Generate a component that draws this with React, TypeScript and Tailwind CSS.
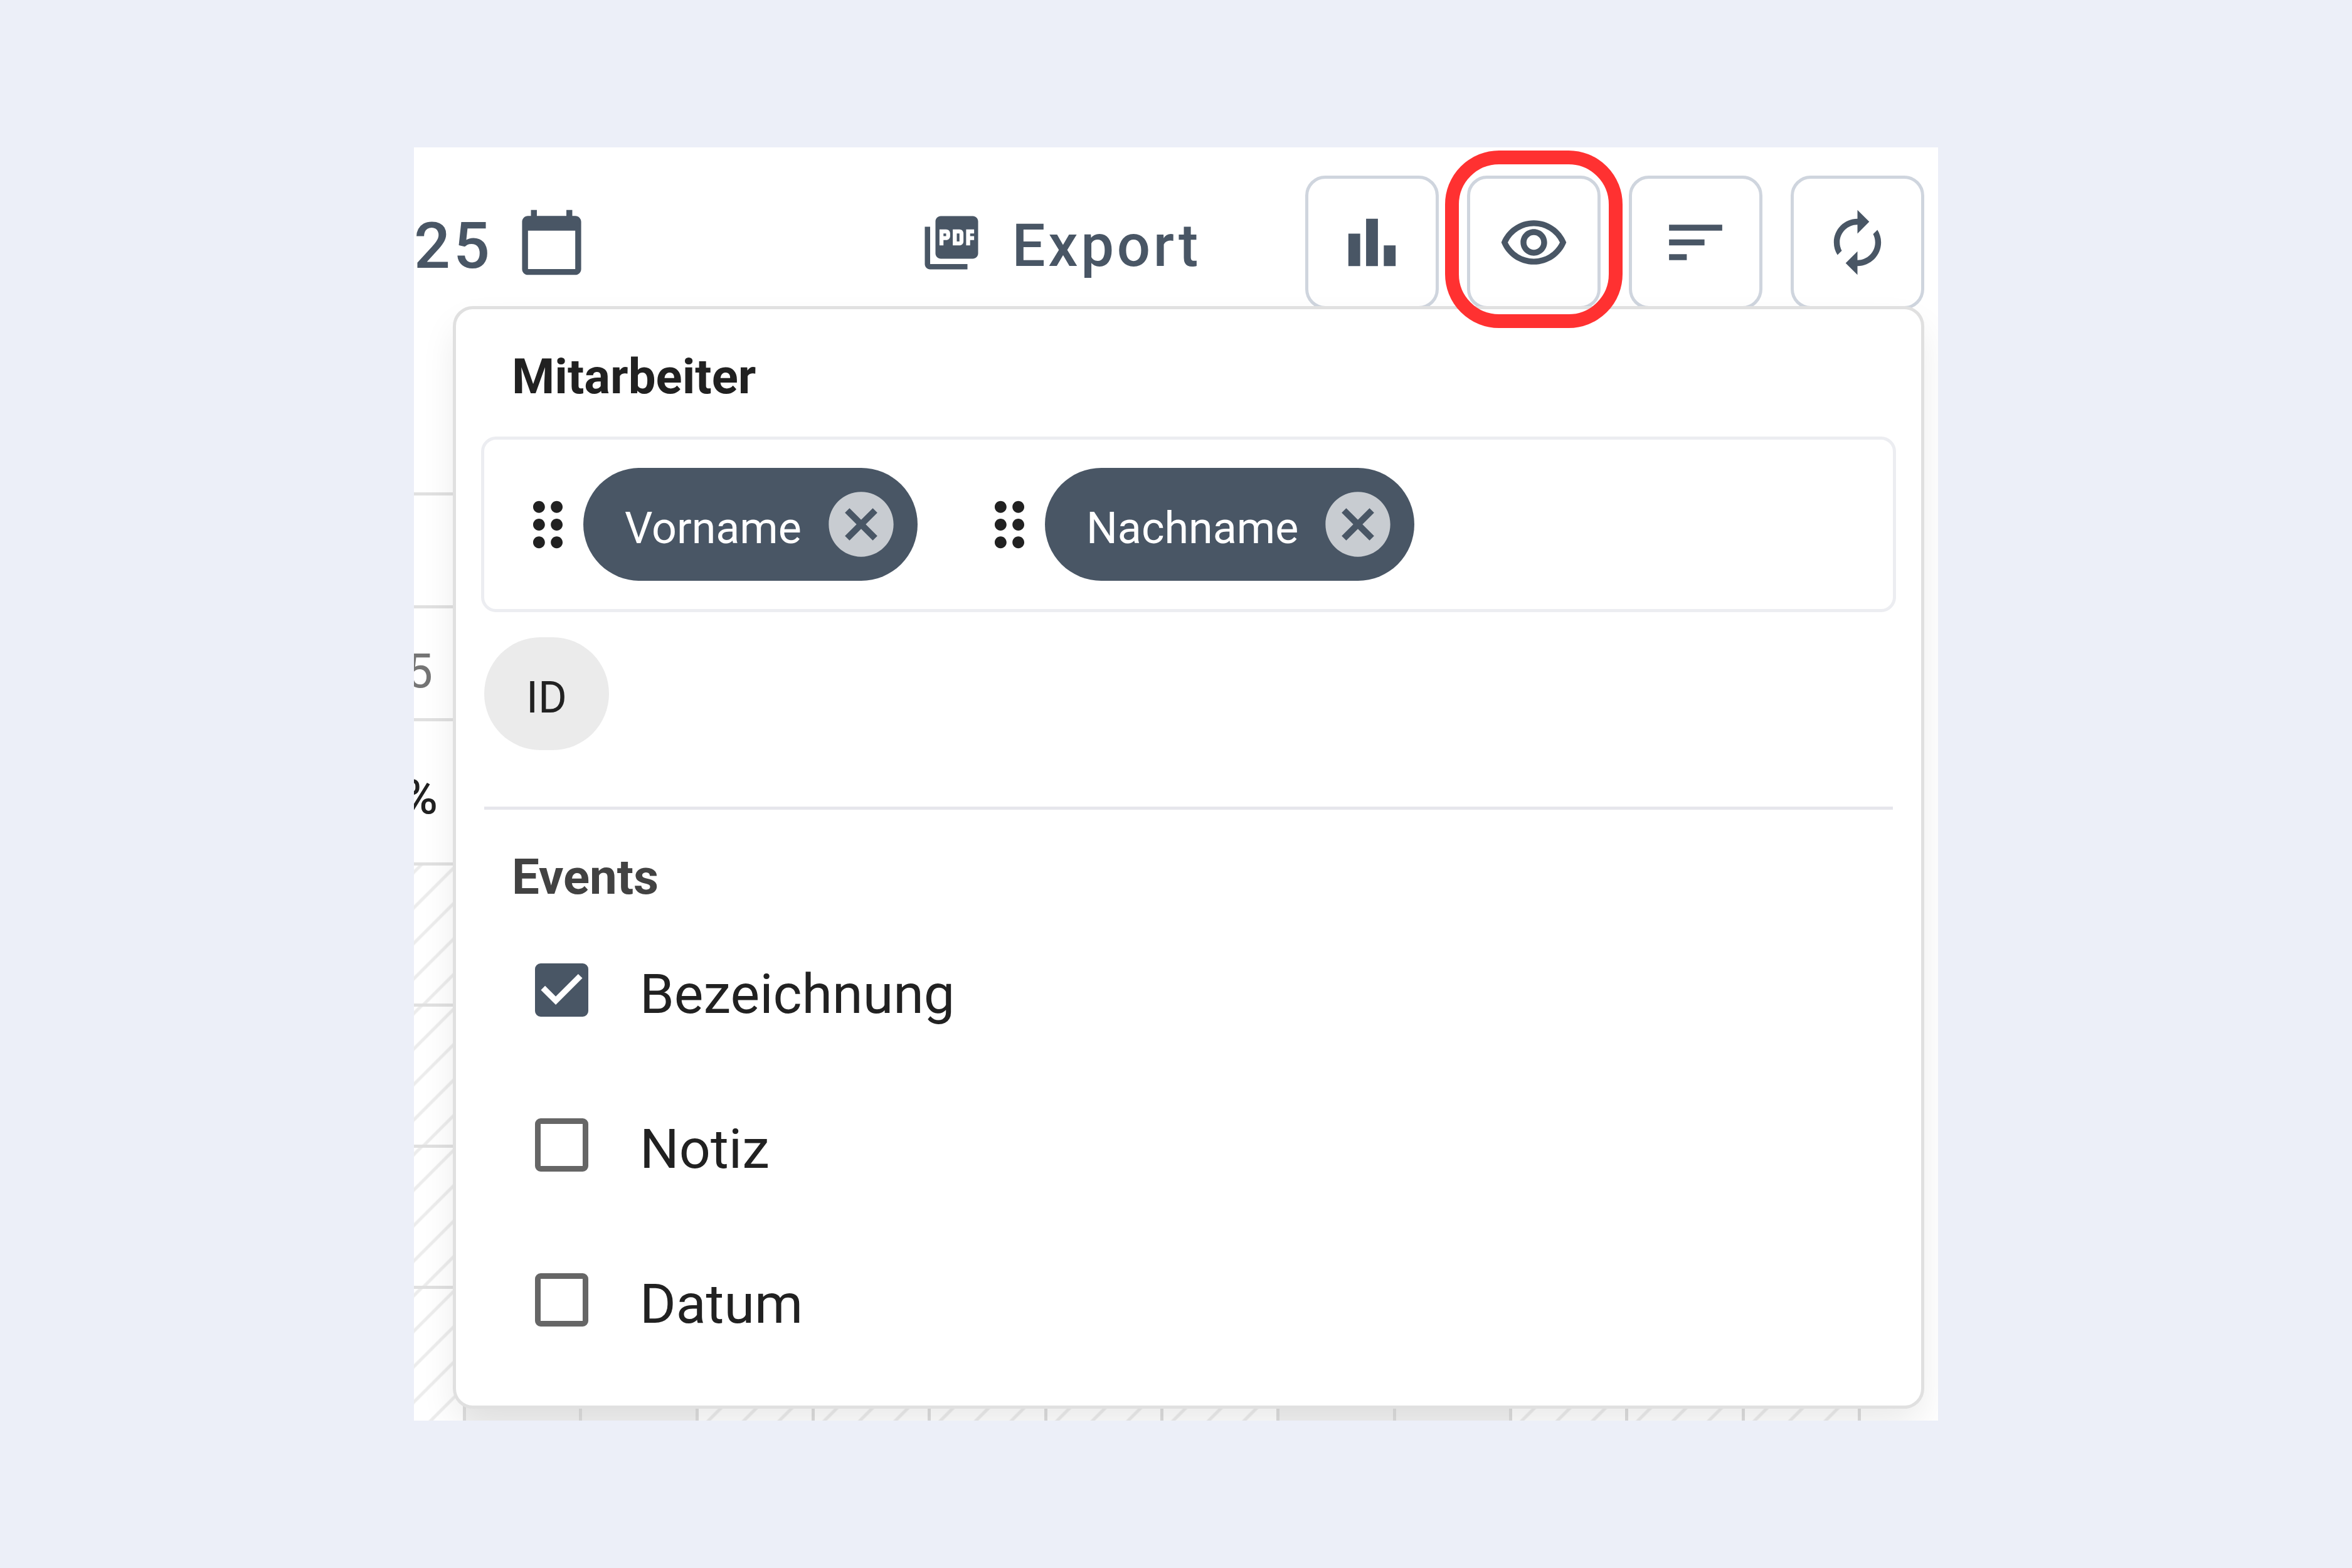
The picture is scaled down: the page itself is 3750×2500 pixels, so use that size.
import { useState } from "react";
import {
  MdAutorenew,
  MdBarChart,
  MdCalendarToday,
  MdCancel,
  MdDragIndicator,
  MdOutlineRemoveRedEye,
  MdPictureAsPdf,
  MdSort,
} from "react-icons/md";

interface EventField {
  id: string;
  label: string;
  checked: boolean;
}

const toolbar = [
  { id: "chart", label: "Statistik", icon: MdBarChart },
  { id: "view", label: "Ansicht", icon: MdOutlineRemoveRedEye },
  { id: "sort", label: "Sortierung", icon: MdSort },
  { id: "reload", label: "Aktualisieren", icon: MdAutorenew },
];

// true = weekend
const days = [true, true, false, false, false, false, false, true, true, false, false, false];

const gutterHatch =
  "bg-[repeating-linear-gradient(135deg,transparent_0px,transparent_4px,#ececec_6px,#ececec_9px,transparent_11px,transparent_40px)]";
const dayHatch =
  "bg-[repeating-linear-gradient(135deg,#ececec_0px,#ececec_1px,transparent_3px,transparent_36px,#ececec_38px,#ececec_40px)]";

function Calendar() {
  return (
    <div className="text-[76px] leading-[96px]">
      <div className="w-[78px] h-[297px] border-b-5 border-[#e0e0e0]" />
      <div className="w-[78px] h-[180px] border-b-5 border-[#e0e0e0]" />
      <div className="w-[78px] h-[180px] border-b-5 border-[#e0e0e0] flex items-center justify-end pt-6 pr-[48px] text-[#757575]">
        5
      </div>
      <div className="w-[78px] h-[230px] border-b-5 border-[#e0e0e0] flex items-center justify-end pt-4 pr-[40px] font-medium text-[#212121]">
        %
      </div>
      <div className={`w-[78px] h-[225px] border-b-5 border-[#e0e0e0] ${gutterHatch}`} />
      <div className={`w-[78px] h-[225px] border-b-5 border-[#e0e0e0] ${gutterHatch}`} />
      <div className={`w-[78px] h-[225px] border-b-5 border-[#e0e0e0] ${gutterHatch}`} />
      <div className="flex h-[210px]">
        <div className={`w-[78px] ${gutterHatch}`} />
        {days.map((weekend, i) => (
          <div
            key={i}
            className={`flex-1 border-l-5 border-[#dedede] ${weekend ? "bg-[#f3f3f3]" : dayHatch}`}
          />
        ))}
        <div className="w-[128px] border-l-5 border-[#dedede]" />
      </div>
    </div>
  );
}

export default function App() {
  const [columns, setColumns] = useState(["Vorname", "Nachname"]);
  const [available, setAvailable] = useState(["ID"]);
  const [fields, setFields] = useState<EventField[]>([
    { id: "bezeichnung", label: "Bezeichnung", checked: true },
    { id: "notiz", label: "Notiz", checked: false },
    { id: "datum", label: "Datum", checked: false },
  ]);

  const removeColumn = (name: string) => {
    setColumns(columns.filter((c) => c !== name));
    setAvailable([...available, name]);
  };

  const addColumn = (name: string) => {
    setAvailable(available.filter((c) => c !== name));
    setColumns([...columns, name]);
  };

  const toggleField = (id: string) => {
    setFields(fields.map((f) => (f.id === id ? { ...f, checked: !f.checked } : f)));
  };

  return (
    <div className="min-h-screen flex items-center justify-center bg-[#eceff8] font-[Roboto,sans-serif] text-[#212121]">
      <div className="w-[64.8%] overflow-hidden bg-white">
        {/* Kopfzeile */}
        <header className="flex items-center justify-between pt-[45px] pr-[22px] text-[#495665]">
          <button className="flex items-center gap-[37px] text-[102px] leading-[120px] font-medium tracking-wider">
            <span className="pt-[10px]">25</span>
            <MdCalendarToday className="size-[113px]" />
          </button>
          <div className="flex items-center gap-[166px]">
            <button className="flex items-center gap-[45px] text-[94px] leading-[120px] font-medium tracking-wider">
              <MdPictureAsPdf className="size-[102px]" />
              <span className="pt-[10px]">Export</span>
            </button>
            <div className="flex gap-[45px]">
              {toolbar.map(({ id, label, icon: Icon }) => (
                <button
                  key={id}
                  aria-label={label}
                  className="relative size-[213px] flex items-center justify-center rounded-[32px] border-5 border-[#cfd5de]"
                >
                  <Icon className="size-[113px]" />
                  {id === "view" && (
                    <span className="absolute -inset-x-[40px] -top-[45px] -bottom-[35px] z-20 rounded-[86px] border-22 border-[#ff3131]" />
                  )}
                </button>
              ))}
            </div>
          </div>
        </header>

        <div className="relative">
          <Calendar />

          {/* Ansichtsmenü */}
          <div className="absolute -top-[5px] left-[62px] right-[22px] z-10 rounded-[32px] border-5 border-[#e0e0e0] bg-white px-[40px] pt-[60px] pb-[112px] shadow-[0_28px_60px_-6px_rgba(0,0,0,0.09)]">
            <h2 className="pl-[49px] text-[78px] leading-[96px] font-bold">Mitarbeiter</h2>
            <div className="mt-[47px] flex gap-[90px] rounded-[24px] border-5 border-[#ecedf1] p-[45px]">
              {columns.map((name) => (
                <div key={name} className="flex items-center">
                  <MdDragIndicator className="size-[113px]" />
                  <div className="h-[180px] flex items-center gap-[33px] rounded-full bg-[#495665] pl-[66px] pr-[28px] text-[70px] leading-[96px] text-white">
                    <span className="pt-[12px]">{name}</span>
                    <button aria-label={`${name} entfernen`} onClick={() => removeColumn(name)}>
                      <MdCancel className="size-[124px] text-[#c8ccd1]" />
                    </button>
                  </div>
                </div>
              ))}
            </div>
            <div className="mt-[40px] ml-[5px] flex gap-[45px]">
              {available.map((name) => (
                <button
                  key={name}
                  onClick={() => addColumn(name)}
                  className="h-[180px] rounded-full bg-[#ebebeb] px-[67px] pt-[12px] text-[70px] leading-[96px]"
                >
                  {name}
                </button>
              ))}
            </div>

            <hr className="mx-[5px] mt-[90px] border-t-5 border-[#e6e6ec]" />

            <h2 className="mt-[60px] pl-[49px] text-[78px] leading-[96px] font-bold text-[#424242]">
              Events
            </h2>
            <div className="mt-[75px] flex flex-col gap-[134px] pl-[86px]">
              {fields.map((field) => (
                <label
                  key={field.id}
                  htmlFor={field.id}
                  className="h-[113px] flex items-center gap-[82px] text-[88px] leading-[96px]"
                >
                  <span className="relative size-[85px]">
                    <input
                      id={field.id}
                      type="checkbox"
                      checked={field.checked}
                      onChange={() => toggleField(field.id)}
                      className="peer block size-[85px] appearance-none rounded-[9px] border-9 border-[#666666] checked:border-[#495665] checked:bg-[#495665]"
                    />
                    <svg
                      viewBox="3 3 18 18"
                      className="absolute inset-0 hidden size-[85px] fill-white pointer-events-none peer-checked:block"
                    >
                      <path d="M10 17l-5-5 1.41-1.41L10 14.17l7.59-7.59L19 8z" />
                    </svg>
                  </span>
                  <span className="pt-[12px]">{field.label}</span>
                </label>
              ))}
            </div>
          </div>
        </div>
      </div>
    </div>
  );
}
